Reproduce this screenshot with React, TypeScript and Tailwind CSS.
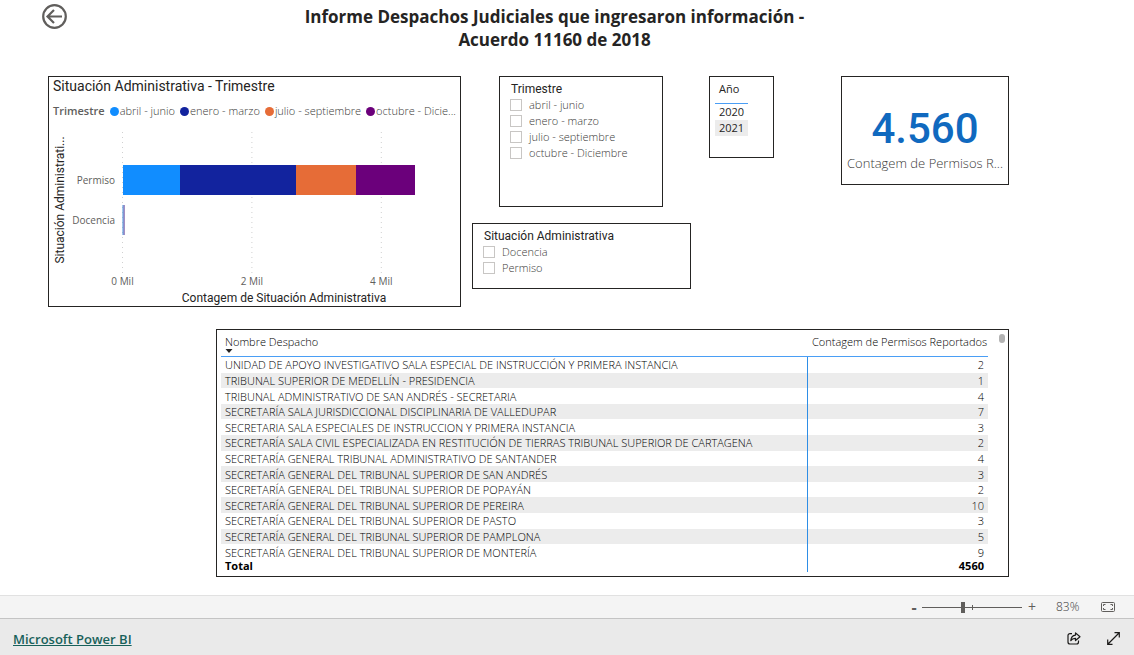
import * as React from "react";
import { clsx } from "clsx";

interface Segment {
  label: string;
  value: number;
  fill: string;
  dot: string;
}

interface Office {
  name: string;
  count: number;
}

const segments: Segment[] = [
  { label: "abril - junio", value: 890, fill: "#118dff", dot: "bg-[#118dff]" },
  { label: "enero - marzo", value: 1790, fill: "#12239e", dot: "bg-[#12239e]" },
  { label: "julio - septiembre", value: 935, fill: "#e66c37", dot: "bg-[#e66c37]" },
  { label: "octubre - Dicie...", value: 905, fill: "#6b007b", dot: "bg-[#6b007b]" },
];

const quarters = ["abril - junio", "enero - marzo", "julio - septiembre", "octubre - Diciembre"];
const situations = ["Docencia", "Permiso"];
const years = [2020, 2021];

const offices: Office[] = [
  { name: "UNIDAD DE APOYO INVESTIGATIVO SALA ESPECIAL DE INSTRUCCIÓN Y PRIMERA INSTANCIA", count: 2 },
  { name: "TRIBUNAL SUPERIOR DE MEDELLÍN - PRESIDENCIA", count: 1 },
  { name: "TRIBUNAL ADMINISTRATIVO DE SAN ANDRÉS - SECRETARIA", count: 4 },
  { name: "SECRETARÍA SALA JURISDICCIONAL DISCIPLINARIA DE VALLEDUPAR", count: 7 },
  { name: "SECRETARIA SALA ESPECIALES DE INSTRUCCION Y PRIMERA INSTANCIA", count: 3 },
  { name: "SECRETARÍA SALA CIVIL ESPECIALIZADA EN RESTITUCIÓN DE TIERRAS TRIBUNAL SUPERIOR DE CARTAGENA", count: 2 },
  { name: "SECRETARÍA GENERAL TRIBUNAL ADMINISTRATIVO DE SANTANDER", count: 4 },
  { name: "SECRETARÍA GENERAL DEL TRIBUNAL SUPERIOR DE SAN ANDRÉS", count: 3 },
  { name: "SECRETARÍA GENERAL DEL TRIBUNAL SUPERIOR DE POPAYÁN", count: 2 },
  { name: "SECRETARÍA GENERAL DEL TRIBUNAL SUPERIOR DE PEREIRA", count: 10 },
  { name: "SECRETARÍA GENERAL DEL TRIBUNAL SUPERIOR DE PASTO", count: 3 },
  { name: "SECRETARÍA GENERAL DEL TRIBUNAL SUPERIOR DE PAMPLONA", count: 5 },
  { name: "SECRETARÍA GENERAL DEL TRIBUNAL SUPERIOR DE MONTERÍA", count: 9 },
];

// plot geometry, in svg units
const ORIGIN_X = 73.5;
const UNITS_PER_THOUSAND = 64.7;

function BarPlot() {
  let x = ORIGIN_X;
  const bars = segments.map((s) => {
    const width = (s.value / 1000) * UNITS_PER_THOUSAND;
    const bar = { ...s, x, width };
    x += width;
    return bar;
  });

  return (
    <svg viewBox="0 0 411 180" className="block w-full" role="img" aria-label="Situación Administrativa - Trimestre">
      {[0, 2, 4].map((tick) => {
        const tx = ORIGIN_X + tick * UNITS_PER_THOUSAND;
        return (
          <g key={tick}>
            <line x1={tx} x2={tx} y1="6" y2="148" stroke="#d0d0d0" strokeDasharray="1 4" />
            <text x={tx} y="159" textAnchor="middle" fontSize="10" fill="#605e5c">
              {tick} Mil
            </text>
          </g>
        );
      })}
      <g shapeRendering="crispEdges">
        {bars.map((b) => (
          <rect key={b.label} x={b.x} y="39" width={b.width} height="30" fill={b.fill} />
        ))}
      </g>
      <rect x={ORIGIN_X} y="79" width="1.2" height="30" fill="#4a8fdc" />
      <rect x={ORIGIN_X + 1.2} y="79" width="1" height="30" fill="#7d5fa8" />
      <text x="66" y="58" textAnchor="end" fontSize="10" fill="#605e5c">Permiso</text>
      <text x="66" y="98" textAnchor="end" fontSize="10" fill="#605e5c">Docencia</text>
      <g fontFamily="Roboto, sans-serif" fontSize="12" fill="#252423">
        <text x="235" y="176" textAnchor="middle">Contagem de Situación Administrativa</text>
        <text transform="translate(15 74) rotate(-90)" textAnchor="middle">
          Situación Administrati...
        </text>
      </g>
    </svg>
  );
}

interface SlicerProps {
  title: string;
  options: string[];
  className?: string;
}

function Slicer({ title, options, className }: SlicerProps) {
  return (
    <fieldset className={clsx("border border-[#252423] pl-[10px] pt-1", className)}>
      <div className="pl-px font-[Roboto] text-xs leading-4 text-[#252423]">{title}</div>
      {options.map((option) => (
        <label key={option} className="flex h-4 items-center gap-[7px] text-[11px] font-light text-[#3b3a39]">
          <input type="checkbox" className="size-3 appearance-none border border-[#c8c6c4] bg-white checked:bg-[#605e5c]" />
          {option}
        </label>
      ))}
    </fieldset>
  );
}

function OfficeTable() {
  const total = 4560;
  return (
    <section className="ml-[168px] mt-[22px] flex items-start border border-[#252423] pb-1 pl-1 pr-[3px]">
      <table className="h-[242px] w-full table-fixed border-separate border-spacing-0 text-[11px] leading-[15px] font-light text-black">
        <colgroup>
          <col />
          <col className="w-[180px]" />
        </colgroup>
        <thead>
          <tr className="h-[27px]">
            <th className="border-b border-b-[#4a9ef5] px-1 pt-1 text-left align-top font-light">
              Nombre Despacho
              <svg viewBox="0 0 8 4" className="block h-1 w-2" aria-hidden="true">
                <path d="M0.5 0h7L4 4z" fill="#252423" />
              </svg>
            </th>
            <th className="border-b border-b-[#4a9ef5] px-1 pt-1 text-right align-top font-light whitespace-nowrap">
              Contagem de Permisos Reportados
            </th>
          </tr>
        </thead>
        <tbody>
          {offices.map((office) => (
            <tr key={office.name} className="even:bg-[#ececec]">
              <td className="truncate border-r border-r-[#2e8ee6] px-1 py-0">{office.name}</td>
              <td className="px-1 py-0 text-right">{office.count}</td>
            </tr>
          ))}
        </tbody>
        <tfoot>
          <tr className="h-3 font-bold leading-3">
            <td className="border-r border-r-[#2e8ee6] px-1 py-0">Total</td>
            <td className="px-1 py-0 text-right">{total}</td>
          </tr>
        </tfoot>
      </table>
      <div className="ml-[11px] mt-1 h-[9px] w-[6px] shrink-0 rounded-full bg-[#b3b3b3]" />
    </section>
  );
}

function ZoomBar() {
  const [zoom, setZoom] = React.useState(83);
  return (
    <div className="flex h-[23px] items-center justify-end border-t border-[#e1e1e1] bg-[#f4f4f4] pr-[19px] text-xs text-[#605e5c]">
      <button type="button" aria-label="Alejar" className="w-4 text-center text-base leading-4 font-bold" onClick={() => setZoom(zoom - 1)}>
        -
      </button>
      <div className="relative flex items-center">
        <span className="absolute left-[50px] h-[5px] w-px bg-[#605e5c]" />
        <input
          type="range"
          aria-label="Zoom"
          min={10}
          max={190}
          value={zoom}
          onChange={(e) => setZoom(Number(e.target.value))}
          className="h-[11px] w-[100px] appearance-none bg-[linear-gradient(#605e5c,#605e5c)] bg-[length:100%_1px] bg-center bg-no-repeat [&::-webkit-slider-thumb]:h-[11px] [&::-webkit-slider-thumb]:w-1 [&::-webkit-slider-thumb]:appearance-none [&::-webkit-slider-thumb]:bg-[#605e5c]"
        />
      </div>
      <button type="button" aria-label="Acercar" className="ml-[2px] w-4 text-center text-sm leading-4" onClick={() => setZoom(zoom + 1)}>
        +
      </button>
      <span className="ml-4 w-7 font-light text-[#3b3a39]">{zoom}%</span>
      <button type="button" aria-label="Ajustar a la página" className="ml-[17px]">
        <svg viewBox="0 0 14 10" className="block h-[10px] w-[14px]" fill="none" stroke="#605e5c">
          <rect x="0.5" y="0.5" width="13" height="9" rx="1" />
          <path d="M2.5 4V2.5H4.500M11.500 4V2.500H9.500M2.500 6v1.500H4.500M11.500 6v1.500H9.500" />
        </svg>
      </button>
    </div>
  );
}

function BrandBar() {
  return (
    <footer className="flex h-[37px] items-center justify-between border-t border-[#c4c4c4] bg-[#eaeaea] pl-[13px] pr-[14px] pt-[3px]">
      <a href="https://powerbi.microsoft.com" className="text-[13px] leading-4 font-semibold text-[#18615a] underline">
        Microsoft Power BI
      </a>
      <div className="flex items-center gap-[26px]">
        <button type="button" aria-label="Compartir">
          <svg viewBox="0 0 14 13" className="block h-[13px] w-[14px]" fill="none" stroke="#1b1a19" strokeWidth="1.2">
            <path d="M5 1.6H3a2 2 0 0 0-2 2V10a2 2 0 0 0 2 2h6.5a2 2 0 0 0 2-2V8.5" />
            <path d="M8.5 0.9 13 4.7 8.5 8.5V6.3C6.3 6.2 4.8 7 3.8 8.7 4 5.6 5.5 3.4 8.5 3.1z" strokeLinejoin="round" />
          </svg>
        </button>
        <button type="button" aria-label="Pantalla completa">
          <svg viewBox="0 0 13 13" className="block size-[13px]" fill="none" stroke="#1b1a19" strokeWidth="1.2">
            <path d="M1 12 12 1M7.5 0.7h4.8v4.8M0.7 7.5v4.8h4.8" />
          </svg>
        </button>
      </div>
    </footer>
  );
}

export default function App() {
  return (
    <div className="flex min-h-screen flex-col bg-white font-['Open_Sans',sans-serif] text-[#252423]">
      <main className="flex-1 pb-[18px]">
        <header className="flex items-start pl-[42px] pr-[92px] pt-1">
          <button type="button" aria-label="Atrás">
            <svg viewBox="0 0 25 25" className="block size-[25px]" fill="none" stroke="#605e5c" strokeWidth="2.2">
              <circle cx="12.5" cy="12.5" r="11.3" />
              <path d="M20 12.5H6M12 6l-6.5 6.5L12 19" />
            </svg>
          </button>
          <h1 className="flex-1 pt-px text-center text-[17px] leading-[23px] font-bold">
            Informe Despachos Judiciales que ingresaron información -
            <br />
            Acuerdo 11160 de 2018
          </h1>
        </header>

        <div className="mt-[25px] pl-12 pr-[125px]">
          <div className="grid grid-cols-[413fr_11px_219fr_18px_65fr_67px_168fr] items-start">
            <section className="col-start-1 min-w-0 border border-[#252423]">
              <h2 className="pl-1 font-[Roboto] text-sm leading-[18px]">Situación Administrativa - Trimestre</h2>
              <div className="mt-2 flex items-center gap-[5px] overflow-hidden whitespace-nowrap pl-1 text-[11px] leading-4 font-light text-[#3b3a39]">
                <span className="font-semibold text-[#605e5c]">Trimestre</span>
                {segments.map((s) => (
                  <span key={s.label} className="flex items-center gap-px">
                    <span className={clsx("size-[9px] rounded-full", s.dot)} />
                    {s.label}
                  </span>
                ))}
              </div>
              <div className="mt-[7px]">
                <BarPlot />
              </div>
            </section>

            <div className="col-start-3 min-w-0">
              <Slicer title="Trimestre" options={quarters} className="ml-[27px] mr-[28px] min-h-[131px]" />
              <Slicer title="Situación Administrativa" options={situations} className="mt-4 min-h-[66px]" />
            </div>

            <section className="col-start-5 min-h-[82px] min-w-0 border border-[#252423] pl-[5px] pt-1">
              <table className="w-[33px] border-separate border-spacing-0 text-[11px] leading-4">
                <thead>
                  <tr>
                    <th className="border-b border-b-[#4a9ef5] px-1 pb-[6px] text-left font-normal">Año</th>
                  </tr>
                </thead>
                <tbody>
                  {years.map((year) => (
                    <tr key={year} className="even:bg-[#ececec]">
                      <td className="px-1 py-0">{year}</td>
                    </tr>
                  ))}
                </tbody>
              </table>
            </section>

            <section className="col-start-7 min-h-[109px] min-w-0 border border-[#252423] px-1 pt-7 text-center">
              <div className="font-[Roboto] text-[42px] leading-[48px] font-medium text-[#1069bf]">4.560</div>
              <div className="truncate text-[13px] leading-5 font-light text-[#3b3a39]">Contagem de Permisos R...</div>
            </section>
          </div>

          <OfficeTable />
        </div>
      </main>
      <ZoomBar />
      <BrandBar />
    </div>
  );
}
